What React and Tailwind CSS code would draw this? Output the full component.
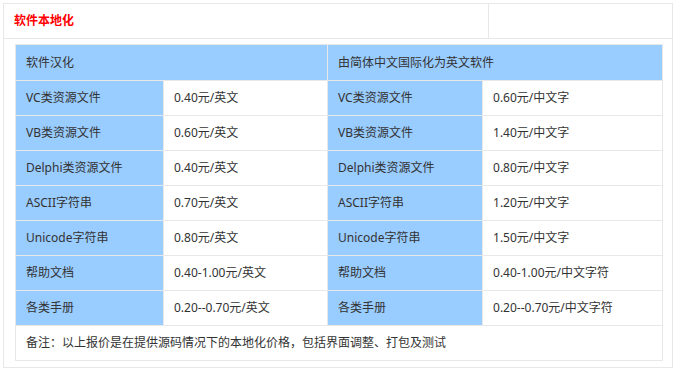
import React from 'react';

const rows = [
  ['VC类资源文件', '0.40元/英文', 'VC类资源文件', '0.60元/中文字'],
  ['VB类资源文件', '0.60元/英文', 'VB类资源文件', '1.40元/中文字'],
  ['Delphi类资源文件', '0.40元/英文', 'Delphi类资源文件', '0.80元/中文字'],
  ['ASCII字符串', '0.70元/英文', 'ASCII字符串', '1.20元/中文字'],
  ['Unicode字符串', '0.80元/英文', 'Unicode字符串', '1.50元/中文字'],
  ['帮助文档', '0.40-1.00元/英文', '帮助文档', '0.40-1.00元/中文字符'],
  ['各类手册', '0.20--0.70元/英文', '各类手册', '0.20--0.70元/中文字符'],
];

const cell = 'h-[35px] px-[10px] border border-[#e8e8e8] align-middle';

export default function App() {
  return (
    <div className="bg-white min-h-[375px] pt-[3px] pl-[3px] font-['Noto_Sans','Noto_Sans_CJK_SC',sans-serif] text-[12px] text-[#333]">
      <table className="w-[670px] border-collapse table-fixed">
        <tbody>
          <tr>
            <td className="w-[485px] h-[35px] px-[10px] border border-[#e8e8e8] text-[#ff0000] font-bold">
              软件本地化
            </td>
            <td className="h-[35px] border border-[#e8e8e8]"></td>
          </tr>
          <tr>
            <td colSpan={2} className="border border-[#e8e8e8] pt-[5px] pb-[6px] pl-[11px] pr-[10px]">
              <table className="w-[647px] border-collapse table-fixed">
                <colgroup>
                  <col className="w-[148px]" />
                  <col className="w-[164px]" />
                  <col className="w-[155px]" />
                  <col className="w-[180px]" />
                </colgroup>
                <tbody>
                  <tr>
                    <td colSpan={2} className={`${cell} h-[36px] bg-[#99ccff]`}>软件汉化</td>
                    <td colSpan={2} className={`${cell} h-[36px] bg-[#99ccff]`}>由简体中文国际化为英文软件</td>
                  </tr>
                  {rows.map((r, i) => (
                    <tr key={i}>
                      <td className={`${cell} bg-[#99ccff]`}>{r[0]}</td>
                      <td className={cell}>{r[1]}</td>
                      <td className={`${cell} bg-[#99ccff]`}>{r[2]}</td>
                      <td className={cell}>{r[3]}</td>
                    </tr>
                  ))}
                  <tr>
                    <td colSpan={4} className={cell}>
                      备注：以上报价是在提供源码情况下的本地化价格，包括界面调整、打包及测试
                    </td>
                  </tr>
                </tbody>
              </table>
            </td>
          </tr>
        </tbody>
      </table>
    </div>
  );
}
